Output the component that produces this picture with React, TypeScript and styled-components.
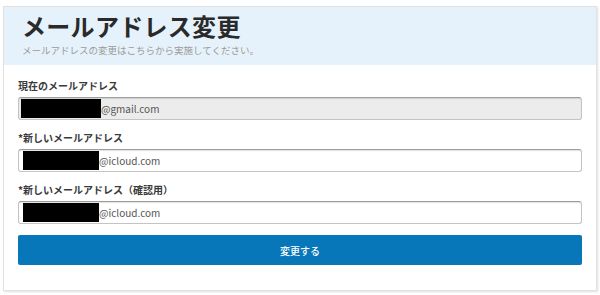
import React from "react";
import styled, { createGlobalStyle } from "styled-components";

const GlobalStyle = createGlobalStyle`
  html, body {
    margin: 0;
    padding: 0;
    background: #ffffff;
    font-family: "Noto Sans CJK JP", "Noto Sans", sans-serif;
  }
`;

const Page = styled.div`
  padding: 6px 3px 4px 3px;
`;

const Card = styled.section`
  width: 594px;
  box-sizing: border-box;
  background: #ffffff;
  border: 1px solid #e2e2e2;
  box-shadow: 1px 1px 2px rgba(0, 0, 0, 0.12);
`;

const Header = styled.header`
  background: #e6f2fb;
  padding: 5px 18px 9px 18px;
`;

const Title = styled.h1`
  margin: 0;
  font-size: 24px;
  line-height: 28px;
  font-weight: 700;
  color: #2a2a2a;
  letter-spacing: 0.3px;
`;

const Subtitle = styled.p`
  margin: 4px 0 0 0;
  font-size: 9.5px;
  line-height: 12px;
  color: #9a9a9a;
`;

const Body = styled.div`
  padding: 14px 14px 25px 14px;
  display: flex;
  flex-direction: column;
`;

const Field = styled.div<{ $first?: boolean }>`
  margin-top: ${({ $first }) => ($first ? "0" : "11px")};
  display: flex;
  flex-direction: column;
`;

const Label = styled.label`
  font-size: 10px;
  line-height: 14px;
  font-weight: 700;
  color: #3a3a3a;
  margin-bottom: 4px;
`;

const Input = styled.div<{ $readOnly?: boolean }>`
  height: 23px;
  box-sizing: border-box;
  display: flex;
  align-items: center;
  padding: 0 4px;
  border: 1px solid #c4c4c4;
  border-top-color: #9d9d9d;
  border-radius: 3px;
  background: ${({ $readOnly }) => ($readOnly ? "#ececec" : "#ffffff")};
  box-shadow: inset 0 1px 1px rgba(0, 0, 0, 0.12);
  font-size: 10px;
  color: #555;
`;

const Redacted = styled.span<{ $w: number }>`
  display: inline-block;
  width: ${({ $w }) => $w}px;
  height: 19px;
  background: #000;
  margin-left: ${({ $w }) => ($w > 78 ? "-2px" : "0")};
`;

const Button = styled.button`
  margin-top: 11px;
  height: 30px;
  border: none;
  border-radius: 2px;
  background: #0877b9;
  color: #ffffff;
  font-family: inherit;
  font-size: 10px;
  font-weight: 500;
  cursor: pointer;
`;

const fields = [
  { label: "現在のメールアドレス", domain: "@gmail.com", readOnly: true, w: 80 },
  { label: "*新しいメールアドレス", domain: "@icloud.com", readOnly: false, w: 76 },
  { label: "*新しいメールアドレス（確認用）", domain: "@icloud.com", readOnly: false, w: 76 },
];

export default function App() {
  return (
    <Page>
      <GlobalStyle />
      <Card>
        <Header>
          <Title>メールアドレス変更</Title>
          <Subtitle>メールアドレスの変更はこちらから実施してください。</Subtitle>
        </Header>
        <Body>
          {fields.map((f, i) => (
            <Field key={f.label} $first={i === 0}>
              <Label>{f.label}</Label>
              <Input $readOnly={f.readOnly}>
                <Redacted $w={f.w} />
                <span>{f.domain}</span>
              </Input>
            </Field>
          ))}
          <Button type="button">変更する</Button>
        </Body>
      </Card>
    </Page>
  );
}
